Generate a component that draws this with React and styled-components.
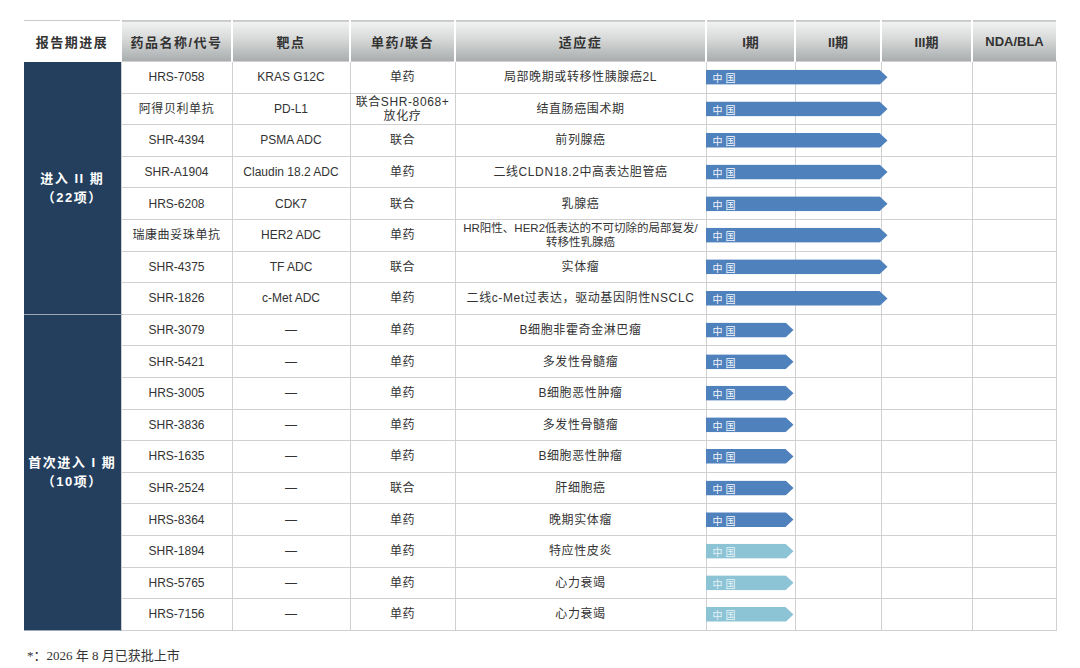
import React from 'react';
import styled, { createGlobalStyle } from 'styled-components';

const GlobalStyle = createGlobalStyle`
  html, body {
    margin: 0;
    padding: 0;
    background: #fff;
  }
  body {
    font-family: "Liberation Sans", "Noto Sans CJK SC", sans-serif;
    color: #333;
  }
`;

const phaseTwo = [
  { code: '阿得贝利单抗', target: 'PD-L1', mode: '联合SHR-8068+|放化疗', ind: '结直肠癌围术期' },
  { code: 'SHR-4394', target: 'PSMA ADC', mode: '联合', ind: '前列腺癌' },
  { code: 'SHR-A1904', target: 'Claudin 18.2 ADC', mode: '单药', ind: '二线CLDN18.2中高表达胆管癌' },
  { code: 'HRS-6208', target: 'CDK7', mode: '联合', ind: '乳腺癌' },
  { code: '瑞康曲妥珠单抗', target: 'HER2 ADC', mode: '单药', ind: 'HR阳性、HER2低表达的不可切除的局部复发/|转移性乳腺癌', tight: true },
  { code: 'SHR-4375', target: 'TF ADC', mode: '联合', ind: '实体瘤' },
  { code: 'SHR-1826', target: 'c-Met ADC', mode: '单药', ind: '二线c-Met过表达，驱动基因阴性NSCLC' },
];

const phaseOne = [
  { code: 'SHR-5421', mode: '单药', ind: '多发性骨髓瘤' },
  { code: 'HRS-3005', mode: '单药', ind: 'B细胞恶性肿瘤' },
  { code: 'SHR-3836', mode: '单药', ind: '多发性骨髓瘤' },
  { code: 'HRS-1635', mode: '单药', ind: 'B细胞恶性肿瘤' },
  { code: 'SHR-2524', mode: '联合', ind: '肝细胞癌' },
  { code: 'HRS-8364', mode: '单药', ind: '晚期实体瘤' },
  { code: 'SHR-1894', mode: '单药', ind: '特应性皮炎', light: true },
  { code: 'HRS-5765', mode: '单药', ind: '心力衰竭', light: true },
  { code: 'HRS-7156', mode: '单药', ind: '心力衰竭', light: true },
];

const widths = [97, 111, 118, 105, 251, 89, 86, 91, 84];

const Page = styled.div`
  padding: 20px 0 0 24px;
  height: 668px;
  box-sizing: border-box;
  overflow: hidden;
`;

const Table = styled.table`
  width: 1032px;
  table-layout: fixed;
  border-collapse: collapse;
  border-top: 1px solid #cacaca;
`;

const HeadCell = styled.th`
  height: 40px;
  padding: 0;
  font-size: 13px;
  font-weight: bold;
  letter-spacing: ${(p) => (p.$latin ? '0' : '1.5px')};
  color: #333;
  text-align: center;
  border-left: 2px solid #fff;
  background: ${(p) =>
    p.$plain ? '#fff' : 'linear-gradient(to bottom, #f2f3f3 0%, #d6d8d8 45%, #a8acac 100%)'};
  &:first-child {
    border-left: none;
  }
`;

const Row = styled.tr`
  height: 31.6px;
`;

const GroupCell = styled.td`
  background: #243f5e;
  color: #fff;
  font-weight: bold;
  font-size: 13px;
  line-height: 19px;
  letter-spacing: 1.5px;
  text-align: center;
  white-space: nowrap;
  padding: 0;
  border-bottom: 1px solid #9aa8b8;
`;

const Cell = styled.td`
  position: relative;
  height: 31.6px;
  box-sizing: border-box;
  padding: 0;
  border: 1px solid #d0d0d0;
  font-size: ${(p) => (p.$tight ? '11.5px' : '12px')};
  letter-spacing: ${(p) => (p.$cjk && !p.$tight ? '0.6px' : '0')};
  line-height: 14px;
  color: #333;
  text-align: center;
  vertical-align: middle;
  white-space: nowrap;
  overflow: visible;
`;

const Bar = styled.div`
  position: absolute;
  left: -1px;
  top: 50%;
  transform: translateY(-50%);
  width: ${(p) => p.$len}px;
  height: 15px;
  background: ${(p) => (p.$light ? '#8cc4d6' : '#4f81bd')};
  color: ${(p) => (p.$light ? '#e6f3f7' : '#f4f7fb')};
  clip-path: polygon(0 0, calc(100% - 8px) 0, 100% 50%, calc(100% - 8px) 100%, 0 100%);
  font-family: "Noto Sans CJK SC", sans-serif;
  font-size: 10px;
  line-height: 15px;
  letter-spacing: 3px;
  text-align: left;
  padding-left: 7px;
  box-sizing: border-box;
  z-index: 1;
`;

const Note = styled.div`
  margin-top: 14px;
  padding-left: 3px;
  font-family: "Liberation Serif", "Noto Sans CJK SC", serif;
  font-size: 13px;
  color: #333;
`;

const isCjk = (s) => /[\u4e00-\u9fff]/.test(s);

const Lines = ({ text }) =>
  text.split('|').map((t, i) => (
    <React.Fragment key={i}>
      {i > 0 && <br />}
      {t}
    </React.Fragment>
  ));

const DrugRow = ({ group, code, target, mode, ind, len, light, tight }) => (
  <Row>
    {group}
    <Cell $cjk={isCjk(code)}>{code}</Cell>
    <Cell>{target}</Cell>
    <Cell $cjk>
      <Lines text={mode} />
    </Cell>
    <Cell $cjk $tight={tight}>
      <Lines text={ind} />
    </Cell>
    <Cell>
      <Bar $len={len} $light={light}>中国</Bar>
    </Cell>
    <Cell />
    <Cell />
    <Cell />
  </Row>
);

const App = () => {
  return (
    <Page>
      <GlobalStyle />
      <Table>
        <colgroup>
          {widths.map((w, i) => (
            <col key={i} style={{ width: w }} />
          ))}
        </colgroup>
        <thead>
          <tr>
            <HeadCell $plain>报告期进展</HeadCell>
            <HeadCell>药品名称/代号</HeadCell>
            <HeadCell>靶点</HeadCell>
            <HeadCell>单药/联合</HeadCell>
            <HeadCell>适应症</HeadCell>
            <HeadCell $latin>I期</HeadCell>
            <HeadCell $latin>II期</HeadCell>
            <HeadCell $latin>III期</HeadCell>
            <HeadCell $latin>NDA/BLA</HeadCell>
          </tr>
        </thead>
        <tbody>
          <DrugRow
            group={
              <GroupCell rowSpan={8}>
                进入 II 期
                <br />
                （22项）
              </GroupCell>
            }
            code="HRS-7058"
            target="KRAS G12C"
            mode="单药"
            ind="局部晚期或转移性胰腺癌2L"
            len={182}
          />
          {phaseTwo.map((r) => (
            <DrugRow key={r.code} {...r} len={182} />
          ))}
          <DrugRow
            group={
              <GroupCell rowSpan={10}>
                首次进入 I 期
                <br />
                （10项）
              </GroupCell>
            }
            code="SHR-3079"
            target="—"
            mode="单药"
            ind="B细胞非霍奇金淋巴瘤"
            len={88}
          />
          {phaseOne.map((r) => (
            <DrugRow key={r.code} {...r} target="—" len={88} />
          ))}
        </tbody>
      </Table>
      <Note>*：2026 年 8 月已获批上市</Note>
    </Page>
  );
};

export default App;
